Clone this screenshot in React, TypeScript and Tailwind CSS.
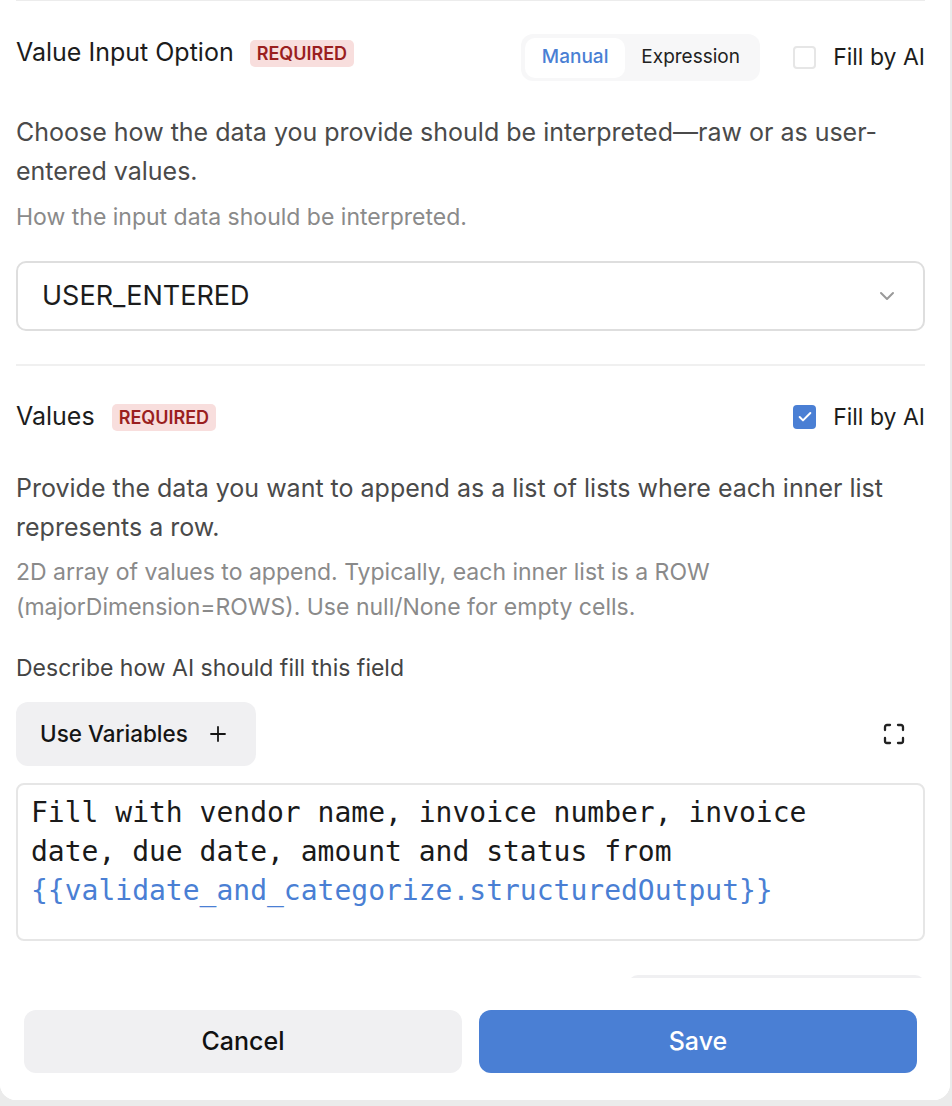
import { ChevronDown, Maximize, Plus, Check } from "lucide-react";

const font = { fontFamily: "Inter, 'Noto Sans', sans-serif" };

const Badge = () => (
  <span className="inline-flex items-center h-[27px] px-[7px] rounded-[5px] bg-[#f8dedd] text-[#9a1f1f] text-[18px] font-semibold">
    REQUIRED
  </span>
);

const FillByAI = ({ checked }: { checked: boolean }) => (
  <label className="flex items-center gap-[17px]">
    {checked ? (
      <span className="w-[23px] h-[24px] rounded-[4px] bg-[#4a7fd4] flex items-center justify-center">
        <Check size={16} strokeWidth={3} className="text-white" />
      </span>
    ) : (
      <span className="w-[23px] h-[23px] rounded-[4px] border-2 border-[#e6e6e6] bg-white" />
    )}
    <span className="text-[23px] text-[#1c1c1c]">Fill by AI</span>
  </label>
);

export default function App() {
  return (
    <div style={font} className="w-[952px] h-[1106px] bg-[#ebebeb] flex">
      <div className="w-[950px] h-[1100px] bg-white rounded-b-[16px] flex flex-col overflow-hidden">
        {/* scroll area */}
        <div className="h-[978px] shrink-0 overflow-hidden pl-4 pr-[25px]">
          <div className="border-t border-[#ececec]" />

          {/* Value Input Option */}
          <div className="mt-[33px] flex items-start justify-between">
            <div className="flex items-center gap-[16px] h-[38px]">
              <span className="text-[25px] text-[#1c1c1c]">Value Input Option</span>
              <Badge />
            </div>
            <div className="flex items-center gap-[33px]">
              <div className="flex items-center h-[47px] w-[239px] p-[4px] rounded-[12px] bg-[#f7f7f8]">
                <button className="h-[40px] w-[100px] rounded-[10px] bg-white text-[19px] font-medium text-[#4a7fd4]">
                  Manual
                </button>
                <button className="h-[40px] flex-1 text-[19px] text-[#222]">Expression</button>
              </div>
              <FillByAI checked={false} />
            </div>
          </div>

          <p className="mt-[32px] text-[25px] leading-[39px] text-[#4a4a4a]">
            Choose how the data you provide should be interpreted—raw or as user-entered values.
          </p>
          <p className="mt-[12px] text-[23px] leading-[28px] text-[#8a8a8a]">
            How the input data should be interpreted.
          </p>

          <div className="mt-[30px] h-[70px] rounded-[10px] border-2 border-[#dedede] flex items-center justify-between pl-[24px] pr-[24px]">
            <span className="text-[27px] text-[#1c1c1c]">USER_ENTERED</span>
            <ChevronDown size={24} strokeWidth={2} className="text-[#9a9a9a]" />
          </div>

          <div className="mt-[33px] border-t-2 border-[#f0f0f0]" />

          {/* Values */}
          <div className="mt-[37px] flex items-center justify-between h-[28px]">
            <div className="flex items-center gap-[17px]">
              <span className="text-[25px] text-[#1c1c1c]">Values</span>
              <Badge />
            </div>
            <FillByAI checked={true} />
          </div>

          <p className="mt-[38px] text-[25px] leading-[39px] text-[#4a4a4a]">
            Provide the data you want to append as a list of lists where each inner list represents a row.
          </p>
          <p className="mt-[8px] text-[23px] leading-[35px] text-[#8a8a8a]">
            2D array of values to append. Typically, each inner list is a ROW (majorDimension=ROWS). Use
            null/None for empty cells.
          </p>

          <p className="mt-[29px] text-[23px] leading-[28px] text-[#444]">
            Describe how AI should fill this field
          </p>

          <div className="mt-[20px] flex items-center justify-between">
            <button className="h-[64px] w-[240px] rounded-[12px] bg-[#f0f0f2] flex items-center justify-start pl-[24px] gap-[18px] text-[22.5px] font-medium text-[#151515]">
              Use Variables
              <Plus size={24} strokeWidth={1.8} />
            </button>
            <Maximize size={24} strokeWidth={2.3} className="mr-[19px] text-[#222]" />
          </div>

          <div
            className="mt-[17px] h-[158px] rounded-[8px] border-2 border-[#e6e6e6] pl-[13px] pr-[30px] pt-[8px] text-[28px] leading-[39px] text-[#1a1a1a]"
            style={{ fontFamily: "'DejaVu Sans Mono', monospace" }}
          >
            Fill with vendor name, invoice number, invoice date, due date, amount and status from{" "}
            <span className="text-[#4a7fd4]">{"{{validate_and_categorize.structuredOutput}}"}</span>
          </div>

          <div className="mt-[34px] ml-auto w-[297px] h-[40px] rounded-t-[10px] bg-[#f0f0f2]" />
        </div>

        {/* footer */}
        <div className="flex-1 bg-white flex gap-[17px] pl-6 pr-[33px] pt-[32px]">
          <button className="flex-1 h-[63px] rounded-[12px] bg-[#f0f0f2] text-[25px] font-medium text-[#111]">
            Cancel
          </button>
          <button className="flex-1 h-[63px] rounded-[12px] bg-[#4a7fd4] text-[25px] font-medium text-white">
            Save
          </button>
        </div>
      </div>
    </div>
  );
}
